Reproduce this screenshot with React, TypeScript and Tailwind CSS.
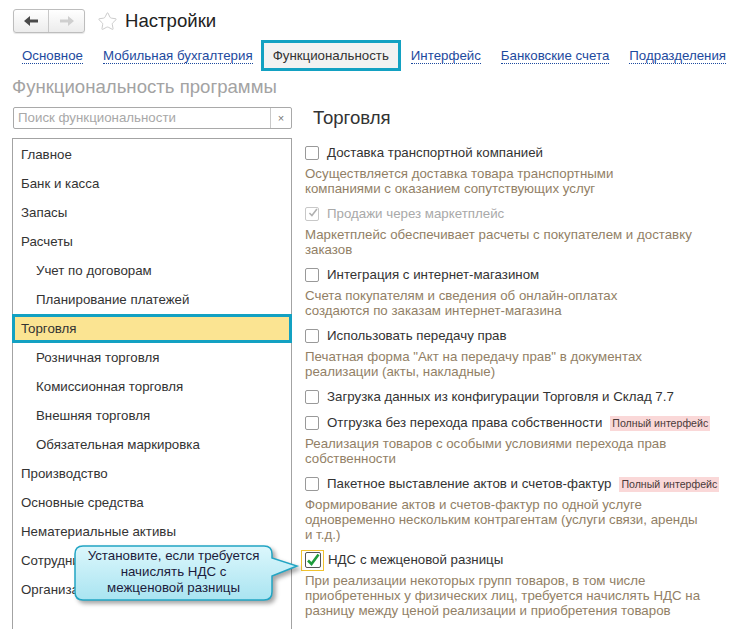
import { Star } from 'lucide-react';

type Item = {
  label: string;
  desc?: string[];
  state?: 'off' | 'disabled' | 'on';
  badge?: boolean;
};

const leftItems: { name: string; sub?: boolean; active?: boolean }[] = [
  { name: 'Главное' },
  { name: 'Банк и касса' },
  { name: 'Запасы' },
  { name: 'Расчеты' },
  { name: 'Учет по договорам', sub: true },
  { name: 'Планирование платежей', sub: true },
  { name: 'Торговля', active: true },
  { name: 'Розничная торговля', sub: true },
  { name: 'Комиссионная торговля', sub: true },
  { name: 'Внешняя торговля', sub: true },
  { name: 'Обязательная маркировка', sub: true },
  { name: 'Производство' },
  { name: 'Основные средства' },
  { name: 'Нематериальные активы' },
  { name: 'Сотрудники' },
  { name: 'Организации' },
];

const items: Item[] = [
  {
    label: 'Доставка транспортной компанией',
    desc: ['Осуществляется доставка товара транспортными', 'компаниями с оказанием сопутствующих услуг'],
  },
  {
    label: 'Продажи через маркетплейс',
    state: 'disabled',
    desc: ['Маркетплейс обеспечивает расчеты с покупателем и доставку', 'заказов'],
  },
  {
    label: 'Интеграция с интернет-магазином',
    desc: ['Счета покупателям и сведения об онлайн-оплатах', 'создаются по заказам интернет-магазина'],
  },
  {
    label: 'Использовать передачу прав',
    desc: ['Печатная форма "Акт на передачу прав" в документах', 'реализации (акты, накладные)'],
  },
  { label: 'Загрузка данных из конфигурации Торговля и Склад 7.7' },
  {
    label: 'Отгрузка без перехода права собственности',
    badge: true,
    desc: ['Реализация товаров с особыми условиями перехода прав', 'собственности'],
  },
  {
    label: 'Пакетное выставление актов и счетов-фактур',
    badge: true,
    desc: [
      'Формирование актов и счетов-фактур по одной услуге',
      'одновременно нескольким контрагентам (услуги связи, аренды',
      'и т.д.)',
    ],
  },
  {
    label: 'НДС с межценовой разницы',
    state: 'on',
    desc: [
      'При реализации некоторых групп товаров, в том числе',
      'приобретенных у физических лиц, требуется начислять НДС на',
      'разницу между ценой реализации и приобретения товаров',
    ],
  },
];

const tabs = ['Основное', 'Мобильная бухгалтерия', 'Функциональность', 'Интерфейс', 'Банковские счета', 'Подразделения'];

function CheckBox({ state }: { state?: Item['state'] }) {
  if (state === 'on') {
    return (
      <div className="-ml-[4px] mr-[4px] w-[23px] h-[21px] border border-[#f0c230] flex items-center justify-center">
        <div className="w-[16px] h-[16px] border border-[#555] rounded-[2px] bg-white flex items-center justify-center">
          <svg width="14" height="14" viewBox="0 0 14 14">
            <path d="M2 7.5 L5.5 11 L12.5 1.5" fill="none" stroke="#1e9c3c" strokeWidth="2.6" />
          </svg>
        </div>
      </div>
    );
  }
  if (state === 'disabled') {
    return (
      <div className="mr-[8px] w-[14px] h-[14px] border border-[#c8c8c8] rounded-[2px] bg-white flex items-center justify-center">
        <svg width="14" height="14" viewBox="0 0 14 14" className="-mt-[3px] ml-[2px]">
          <path d="M2 7 L5.5 10.5 L12.5 1.5" fill="none" stroke="#b0b0b0" strokeWidth="2.2" />
        </svg>
      </div>
    );
  }
  return <div className="mr-[8px] w-[14px] h-[14px] border border-[#999] rounded-[2px] bg-white" />;
}

export default function App() {
  return (
    <div className="relative w-[731px] h-[629px] overflow-hidden bg-white font-['Liberation_Sans',Arial,sans-serif] text-[13.3px] text-[#333]">
      <div className="flex items-center h-[24px] mt-[9px] pl-[13px]">
        <div className="flex h-[24px] border border-[#bdbdbd] rounded-[3px] bg-gradient-to-b from-white to-[#ececec] shadow-[0_1px_1px_rgba(0,0,0,0.1)]">
          <div className="w-[35px] flex items-center justify-center border-r border-[#c8c8c8]">
            <svg width="14" height="10" viewBox="0 0 14 10">
              <path d="M0 5 L6 0 L6 3.5 L14 3.5 L14 6.5 L6 6.5 L6 10 Z" fill="#4a4a4a" />
            </svg>
          </div>
          <div className="w-[35px] flex items-center justify-center">
            <svg width="14" height="10" viewBox="0 0 14 10">
              <path d="M14 5 L8 0 L8 3.5 L0 3.5 L0 6.5 L8 6.5 L8 10 Z" fill="#cfcfcf" />
            </svg>
          </div>
        </div>
        <Star size={21} strokeWidth={1} color="#c4c4c4" className="ml-[12px]" />
        <div className="ml-[7px] text-[18.6px] text-[#222] leading-[24px]">Настройки</div>
      </div>

      <div className="flex items-center h-[31px] mt-[7px] pl-[12px] whitespace-nowrap">
        {tabs.map((t) =>
          t === 'Функциональность' ? (
            <div
              key={t}
              className="shrink-0 h-[31px] px-[9px] border-[3px] border-[#13a1c2] bg-[#f2f2f2] flex items-center text-[#333] -ml-[2px]"
            >
              {t}
            </div>
          ) : (
            <div key={t} className="shrink-0 px-[10px]">
              <span className="text-[#1d4a9e] border-b border-dotted border-[#1d4a9e] leading-[15px]">{t}</span>
            </div>
          ),
        )}
      </div>

      <div className="mt-[5px] pl-[12px] text-[18.6px] text-[#a3a3a3] leading-[22px]">Функциональность программы</div>

      <div className="flex mt-[9px] pl-[12px]">
        <div className="w-[280px] flex flex-col">
          <div className="ml-[1px] h-[22px] flex border border-[#a9a9a9] rounded-[2px] bg-white">
            <div className="flex-1 pl-[4px] leading-[20px] text-[#a8a8a8]">Поиск функциональности</div>
            <div className="w-[21px] border-l border-[#c8c8c8] flex items-center justify-center text-[11px] text-[#777]">×</div>
          </div>
          <div className="mt-[9px] h-[520px] border border-[#a3a3a3] pt-[1px]">
            {leftItems.map((it) =>
              it.active ? (
                <div
                  key={it.name}
                  className="-mx-[1px] h-[29px] border-[3px] border-[#13a1c2] bg-[#fbe492] pl-[6px] leading-[23px] text-[#333]"
                >
                  {it.name}
                </div>
              ) : (
                <div key={it.name} className={`h-[29px] leading-[29px] ${it.sub ? 'pl-[23px]' : 'pl-[8px]'}`}>
                  {it.name}
                </div>
              ),
            )}
          </div>
        </div>

        <div className="ml-[13px] flex-1 flex flex-col">
          <div className="pl-[8px] text-[18.6px] leading-[22px] text-[#333]">Торговля</div>
          <div className="mt-[14px] flex flex-col gap-[6px]">
            {items.map((it) => (
              <div key={it.label} className="flex flex-col">
                <div className="flex items-center h-[20px] whitespace-nowrap">
                  <CheckBox state={it.state} />
                  <span className={it.state === 'disabled' ? 'text-[#a9a9a9]' : 'text-[#333]'}>{it.label}</span>
                  {it.badge && (
                    <span className="ml-[8px] px-[2px] bg-[#fad8d8] text-[10.6px] leading-[15px] text-[#4a3a3a]">
                      Полный интерфейс
                    </span>
                  )}
                </div>
                {it.desc && (
                  <div className="mt-[3px] pb-[2px] leading-[15px] text-[#927f66] whitespace-nowrap">
                    {it.desc.map((l) => (
                      <div key={l}>{l}</div>
                    ))}
                  </div>
                )}
              </div>
            ))}
          </div>
        </div>
      </div>

      <div className="absolute left-[70px] top-[540px] w-[236px] h-[72px]">
        <svg width="236" height="72" viewBox="0 0 236 72" className="absolute inset-0 drop-shadow-[3px_3px_2px_rgba(0,0,0,0.35)]">
          <defs>
            <linearGradient id="cg" x1="0" y1="0" x2="0" y2="1">
              <stop offset="0" stopColor="#dcf7fc" />
              <stop offset="1" stopColor="#a9e4f1" />
            </linearGradient>
          </defs>
          <path
            d="M13 6 H194 Q202 6 202 14 V18 L227 26 L202 36 V52 Q202 60 194 60 H13 Q5 60 5 52 V14 Q5 6 13 6 Z"
            fill="url(#cg)"
            stroke="#22a5c4"
            strokeWidth="1.5"
          />
        </svg>
        <div className="absolute left-[5px] top-[8px] w-[197px] text-center leading-[16px] text-[#1c1c3c]">
          <div>Установите, если требуется</div>
          <div>начислять НДС с</div>
          <div>межценовой разницы</div>
        </div>
      </div>
    </div>
  );
}
